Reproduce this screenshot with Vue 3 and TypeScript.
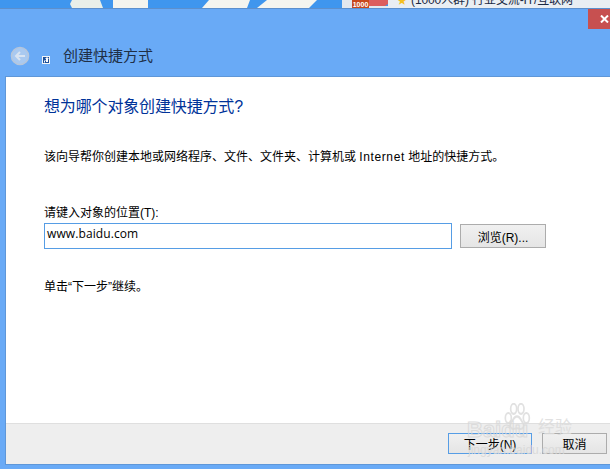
<script setup lang="ts">
const title = '创建快捷方式'
</script>

<template>
  <div class="screen">
    <div class="strip">
      <svg class="strip-art" width="610" height="8" viewBox="0 0 610 8">
        <rect width="610" height="8" fill="#3f96ee" />
        <path d="M72 0h28l3 8h-31l-2-4z" fill="#e9efe9" />
        <path d="M113 0h35v8h-35z" fill="#f4f4ee" />
        <path d="M209 0h41l-3 8h-45z" fill="#f5f5ef" />
        <path d="M267 0h50l-8 8h-52z" fill="#f5f5ef" />
        <rect x="342" y="0" width="10" height="8" fill="#e3e8ee" />
        <rect x="352" y="0" width="17" height="8" fill="#c8481c" />
        <path d="M369 0h19v4l-3 2h-16z" fill="#dc5d5d" />
        <rect x="369" y="6" width="22" height="2" fill="#e3e8ee" />
        <rect x="388" y="0" width="222" height="8" fill="#e9eef3" />
      </svg>
      <span class="badge">1000</span>
      <span class="star">★</span>
      <span class="strip-text">(1000人群) 行业交流-IT/互联网</span>
    </div>
    <div class="window">
      <div class="close">
        <svg width="9" height="8" viewBox="0 0 9 8"><path d="M1 .5l7 7M8 .5l-7 7" stroke="#fff" stroke-width="2" fill="none" /></svg>
      </div>
      <div class="head">
        <svg class="back" width="20" height="20" viewBox="0 0 20 20">
          <circle cx="10" cy="10" r="8.6" fill="#a9c9f0" stroke="#b7c6da" stroke-width="1.4" />
          <path d="M15 10H6.500M10 6l-4 4 4 4" fill="none" stroke="#d9e4f2" stroke-width="2" />
        </svg>
        <svg class="shortcut" width="8" height="8" viewBox="0 0 8 8">
          <rect width="8" height="8" fill="#f2f4f6" />
          <rect x="1" y="1" width="6" height="6" fill="#1c4f9a" />
          <path d="M2 6.500V4.500h2V3H3l2-2 2 2H6v3H4V5H3v1.500z" fill="#fff" />
        </svg>
        <span class="title">{{ title }}</span>
      </div>
      <div class="client">
        <div class="content">
          <h1 class="heading">想为哪个对象创建快捷方式?</h1>
          <p class="desc">该向导帮你创建本地或网络程序、文件、文件夹、计算机或 <span class="latin">Internet</span> 地址的快捷方式。</p>
          <label class="label">请键入对象的位置(T):</label>
          <div class="field-row">
            <div class="input">www.baidu.com</div>
            <div class="btn browse">浏览(R)...</div>
          </div>
          <p class="hint">单击“下一步”继续。</p>
        </div>
        <div class="footer">
          <div class="btn action primary">下一步(N)</div>
          <div class="btn action cancel">取消</div>
        </div>
      </div>
      <div class="watermark" aria-hidden="true">
        <svg class="paw" width="28" height="30" viewBox="0 0 42 36" preserveAspectRatio="none">
          <g fill="none" stroke="#dcdcdc" stroke-width="2.500">
            <ellipse cx="8" cy="18" rx="4.500" ry="6" />
            <ellipse cx="16" cy="7" rx="4.500" ry="6" />
            <ellipse cx="27" cy="7" rx="4.500" ry="6" />
            <ellipse cx="35" cy="18" rx="4.500" ry="6" />
            <path d="M21 16c-5 0-6 5-9 8-3 4 0 8 5 7 3-1 5-1 8 0 5 1 8-3 5-7-3-3-4-8-9-8z" />
          </g>
        </svg>
        <span class="wm-main">Baidu</span>
        <span class="wm-cjk">经验</span>
        <span class="wm-sub">jingyan.baidu.com</span>
      </div>
    </div>
  </div>
</template>

<style scoped>
.screen {
  position: relative;
  width: 610px;
  height: 469px;
  overflow: hidden;
  background: #69aaf6;
  font-family: "Liberation Sans", "Noto Sans CJK SC", sans-serif;
  font-size: 12px;
  color: #000;
}
.strip {
  position: relative;
  height: 8px;
  overflow: hidden;
}
.strip-art {
  display: block;
}
.badge {
  position: absolute;
  left: 352px;
  top: 0;
  width: 17px;
  color: #fff;
  font-size: 7px;
  font-weight: 700;
  line-height: 9px;
  text-align: center;
}
.star {
  position: absolute;
  left: 397px;
  top: -5px;
  color: #f4c020;
  font-size: 10px;
  line-height: 12px;
}
.strip-text {
  position: absolute;
  left: 411px;
  top: -8px;
  font-size: 12px;
  line-height: 16px;
  letter-spacing: -0.1px;
  color: #1b2a44;
  white-space: nowrap;
}
.window {
  position: relative;
  height: 461px;
  display: flex;
  flex-direction: column;
  border-top: 1px solid #5c8fcc;
  box-sizing: border-box;
}
.close {
  position: absolute;
  top: 0;
  right: 0;
  width: 22px;
  height: 20px;
  background: #c75050;
  display: flex;
  align-items: center;
  justify-content: center;
  padding-left: 10px;
  box-sizing: border-box;
}
.head {
  height: 67px;
  box-sizing: border-box;
  padding: 37px 0 0 10px;
  display: flex;
  align-items: flex-start;
}
.back {
  flex: none;
}
.shortcut {
  flex: none;
  margin: 10px 0 0 12px;
}
.title {
  margin-left: 13px;
  font-size: 15px;
  line-height: 20px;
  color: #1f2f46;
}
.client {
  flex: 1;
  margin: 0 0 4px 5px;
  border-top: 1px solid #5f97d8;
  border-left: 1px solid #5f97d8;
  border-bottom: 1px solid #5f97d8;
  background: #fff;
  display: flex;
  flex-direction: column;
  min-height: 0;
}
.content {
  flex: 1;
  padding: 19px 0 0 38px;
}
.heading {
  margin: 0;
  font-size: 16px;
  font-weight: 400;
  line-height: 22px;
  letter-spacing: -0.15px;
  color: #003399;
}
.desc {
  margin: 31px 0 0;
  font-size: 12px;
  line-height: 16px;
}
.latin {
  letter-spacing: 0.6px;
}
.label {
  display: block;
  margin-top: 40px;
  line-height: 16px;
}
.field-row {
  display: flex;
  align-items: center;
  gap: 8px;
  margin-top: 2px;
}
.input {
  width: 408px;
  height: 26px;
  box-sizing: border-box;
  border: 1px solid #569de5;
  padding: 0 2px;
  font-size: 12px;
  letter-spacing: 0.1px;
  line-height: 20px;
  font-family: "Open Sans", "Liberation Sans", sans-serif;
}
.btn {
  box-sizing: border-box;
  display: flex;
  align-items: center;
  justify-content: center;
  border: 1px solid #acacac;
  background: linear-gradient(#f0f0f0, #e5e5e5);
  font-size: 12px;
}
.browse {
  width: 86px;
  height: 24px;
}
.hint {
  margin: 30px 0 0;
  line-height: 16px;
}
.footer {
  height: 41px;
  box-sizing: border-box;
  background: #eeeeee;
  border-top: 1px solid #dfdfdf;
  display: flex;
  justify-content: flex-end;
  align-items: flex-start;
  gap: 10px;
  padding: 9px 3px 0 0;
}
.action {
  height: 21px;
}
.action.primary {
  width: 84px;
  border-color: #569de5;
}
.action.cancel {
  width: 65px;
}
.watermark {
  position: absolute;
  left: 466px;
  top: 394px;
  width: 130px;
  height: 66px;
  pointer-events: none;
  opacity: 0.85;
}
.paw {
  position: absolute;
  left: 37px;
  top: 0;
}
.wm-main {
  position: absolute;
  left: 1px;
  top: 16px;
  font-size: 22px;
  line-height: 22px;
  font-weight: 700;
  color: transparent;
  -webkit-text-stroke: 1px #d8d8d8;
  white-space: nowrap;
}
.wm-cjk {
  position: absolute;
  left: 72px;
  top: 15px;
  font-size: 17px;
  line-height: 20px;
  color: #dcdcdc;
  white-space: nowrap;
}
.wm-sub {
  position: absolute;
  left: 2px;
  top: 40px;
  font-size: 12px;
  line-height: 14px;
  color: #d8d8d8;
  white-space: nowrap;
}
</style>
